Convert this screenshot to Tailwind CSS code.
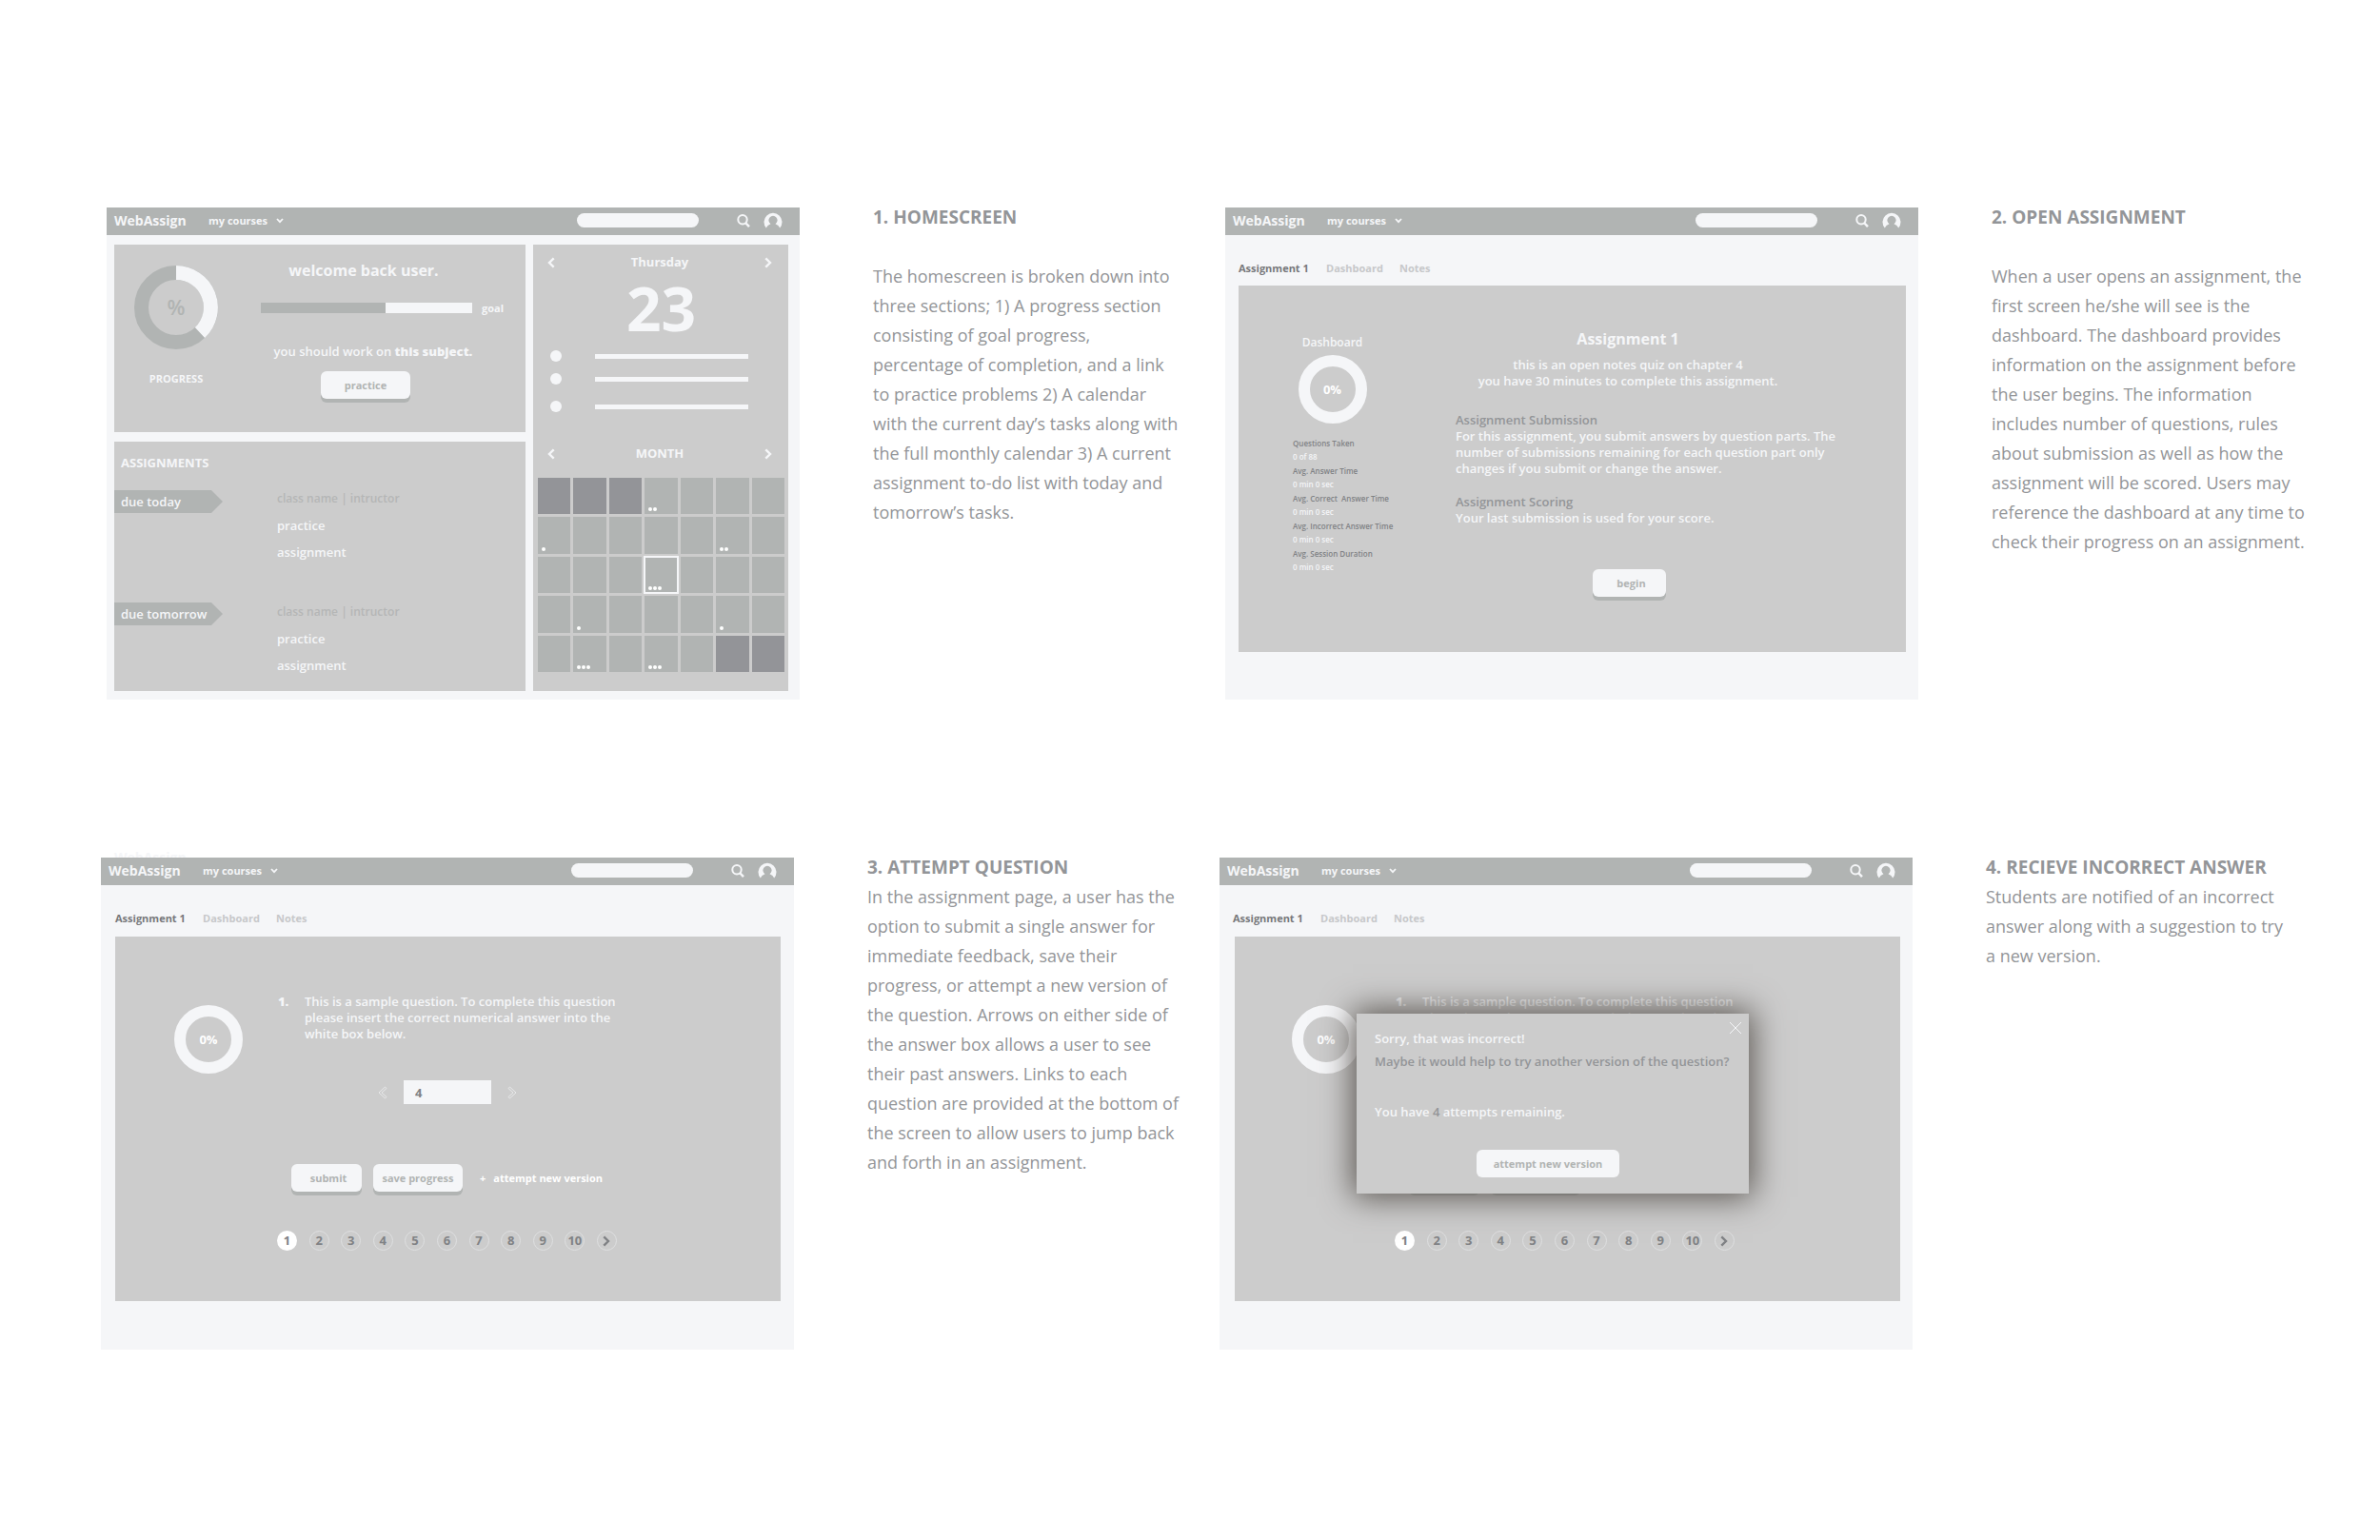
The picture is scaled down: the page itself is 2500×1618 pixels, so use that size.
<!DOCTYPE html>
<html lang="en">
<head>
    <meta charset="UTF-8">
    <meta name="viewport" content="width=device-width, initial-scale=1.0">
    <title>WebAssign Wireframes</title>
    <script src="https://cdn.jsdelivr.net/npm/@tailwindcss/browser@4"></script>
</head>
<body class="bg-white font-['Open_Sans','Noto_Sans',sans-serif] text-[13px] leading-[17px] font-semibold text-[#f5f6f8]">
    <!-- Shared icons -->
    <svg class="hidden" aria-hidden="true">
        <symbol id="down" viewBox="0 0 8 6"><path d="M1 1l3 3.2L7 1" fill="none" stroke="currentColor" stroke-width="1.8"/></symbol>
        <symbol id="left" viewBox="0 0 8 12"><path d="M6.7 1.3L2 6l4.700 4.700" fill="none" stroke="currentColor" stroke-width="2.400"/></symbol>
        <symbol id="right" viewBox="0 0 8 12"><path d="M1.300 1.300L6 6l-4.700 4.700" fill="none" stroke="currentColor" stroke-width="2.400"/></symbol>
        <symbol id="left-thin" viewBox="0 0 10 14"><path d="M7.500 1L1 7l6.500 6L9 11.500 4 7l5-4.500z" fill="none" stroke="currentColor" stroke-width=".8"/></symbol>
        <symbol id="right-thin" viewBox="0 0 10 14"><path d="M2.500 1L9 7l-6.500 6L1 11.500 6 7 1 2.500z" fill="none" stroke="currentColor" stroke-width=".8"/></symbol>
        <symbol id="search" viewBox="0 0 14 14"><circle cx="6" cy="5.800" r="4.700" fill="none" stroke="currentColor" stroke-width="2"/><path d="M9 9l4 4.200" stroke="currentColor" stroke-width="2.500"/></symbol>
        <symbol id="user" viewBox="0 0 20 17"><path d="M2.800 16.500A9.500 9.500 0 1 1 17.200 16.500Q16 13.500 12.500 12.300A4.600 4.600 0 1 0 7.500 12.300Q4 13.500 2.800 16.500z" fill="currentColor"/></symbol>
        <symbol id="close" viewBox="0 0 14 14"><path d="M1 1l12 12M13 1L1 13" stroke="currentColor" stroke-width="1"/></symbol>
    </svg>

    <div class="pt-[218px] pb-[200px] flex flex-col gap-[166px]">
        <div class="grid grid-cols-2 pl-[112px] pr-[38px]">

            <!-- 1. Homescreen -->
            <section class="grid grid-cols-[728fr_370fr] gap-x-[77px] items-start">
                <div class="bg-[#f5f6f8] min-w-0">
                    <header class="bg-[#b1b4b3] h-[29px] pl-2 pr-[18px] pb-0.5 flex items-center">
                        <a href="#" class="w-[99px] text-sm leading-[17px] font-bold">WebAssign</a>
                        <label class="relative flex items-center">
                            <select aria-label="Courses" class="appearance-none w-[79px] text-[11px] font-bold"><option>my courses</option></select>
                            <svg class="absolute right-0 w-2 h-1.5"><use href="#down"/></svg>
                        </label>
                        <input type="search" aria-label="Search" class="ml-auto w-32 h-[15px] rounded-full bg-[#f5f6f8]">
                        <button aria-label="Search" class="ml-10"><svg class="w-3.5 h-3.5"><use href="#search"/></svg></button>
                        <button aria-label="Account" class="ml-3.5"><svg class="w-5 h-[17px]"><use href="#user"/></svg></button>
                    </header>
                    <div class="grid grid-cols-[432fr_268fr] gap-2 pl-2 pr-3 pt-2.5 pb-[9px]">
                        <div class="flex flex-col gap-2.5 min-w-0">
                            <!-- Progress -->
                            <div class="bg-[#cccccc] h-[197px] flex">
                                <div class="w-[130px] pt-[22px] flex flex-col items-center">
                                    <svg class="w-[88px] h-[88px]" viewBox="0 0 88 88">
                                        <circle cx="44" cy="44" r="36.500" fill="none" stroke="#b1b4b3" stroke-width="15"/>
                                        <path d="M44 7.500A36.500 36.500 0 0 1 69 70.500" fill="none" stroke="#f5f6f8" stroke-width="15"/>
                                        <text x="44" y="52" text-anchor="middle" font-size="22" font-weight="600" fill="#b1b4b3">%</text>
                                    </svg>
                                    <p class="mt-[22px] text-[11px] font-bold">PROGRESS</p>
                                </div>
                                <div class="flex-1 pt-4 pl-6">
                                    <h2 class="w-[216px] text-center text-base leading-[22px] font-bold">welcome back user.</h2>
                                    <div class="mt-[20px] flex items-center gap-2.5">
                                        <div class="w-[222px] h-[11px] bg-[#f5f6f8]"><div class="h-full bg-[#b1b4b3]" style="width:59%"></div></div>
                                        <span class="text-[11px] font-bold">goal</span>
                                    </div>
                                    <p class="mt-[29px] w-[236px] text-center text-[13px]">you should work on <b>this subject.</b></p>
                                    <button class="mt-3 ml-[63px] w-[94px] h-[29px] rounded-md bg-[#f5f6f8] shadow-[0_4px_0_#b1b4b3] text-[#b1b4b3] text-[11px] font-bold">practice</button>
                                </div>
                            </div>
                            <!-- Assignments -->
                            <div class="bg-[#cccccc] h-[262px] pt-3.5">
                                <h2 class="pl-[7px] text-[13px] font-bold">ASSIGNMENTS</h2>
                                <div class="mt-5 h-[118px] flex items-start">
                                    <div class="relative w-[114px] h-6 flex items-center pl-[7px]">
                                        <svg class="absolute left-0 top-0 w-[114px] h-6" viewBox="0 0 114 24"><path d="M0 0h102l12 12-12 12H0z" fill="#b1b4b3"/></svg>
                                        <span class="relative">due today</span>
                                    </div>
                                    <ul class="ml-[57px] leading-7 -mt-[5px]">
                                        <li class="text-xs leading-7 text-[#b5b6b6]">class name | intructor</li>
                                        <li><a href="#">practice</a></li>
                                        <li><a href="#">assignment</a></li>
                                    </ul>
                                </div>
                                <div class="flex items-start">
                                    <div class="relative w-[114px] h-6 flex items-center pl-[7px]">
                                        <svg class="absolute left-0 top-0 w-[114px] h-6" viewBox="0 0 114 24"><path d="M0 0h102l12 12-12 12H0z" fill="#b1b4b3"/></svg>
                                        <span class="relative">due tomorrow</span>
                                    </div>
                                    <ul class="ml-[57px] leading-7 -mt-1">
                                        <li class="text-xs leading-7 text-[#b5b6b6]">class name | intructor</li>
                                        <li><a href="#">practice</a></li>
                                        <li><a href="#">assignment</a></li>
                                    </ul>
                                </div>
                            </div>
                        </div>

                        <!-- Calendar -->
                        <div class="bg-[#cccccc] pl-[5px] pr-1 pt-2.5">
                            <div class="flex items-center justify-between pl-2.5 pr-[13px]">
                                <button aria-label="Previous day"><svg class="w-2 h-3"><use href="#left"/></svg></button>
                                <h2 class="font-bold">Thursday</h2>
                                <button aria-label="Next day"><svg class="w-2 h-3"><use href="#right"/></svg></button>
                            </div>
                            <p class="mt-1 text-center text-[64px] leading-[72px] font-bold">23</p>
                            <div class="mt-2 pl-[13px] flex flex-col">
                                <div class="flex items-center gap-[35px]"><i class="w-3 h-3 rounded-full bg-[#f5f6f8]"></i><i class="w-[161px] h-[5px] bg-[#f5f6f8]"></i></div>
                                <div class="mt-3 flex items-center gap-[35px]"><i class="w-3 h-3 rounded-full bg-[#f5f6f8]"></i><i class="w-[161px] h-[5px] bg-[#f5f6f8]"></i></div>
                                <div class="mt-[17px] flex items-center gap-[35px]"><i class="w-3 h-3 rounded-full bg-[#f5f6f8]"></i><i class="w-[161px] h-[5px] bg-[#f5f6f8]"></i></div>
                            </div>
                            <div class="mt-[35px] flex items-center justify-between pl-2.5 pr-[13px]">
                                <button aria-label="Previous month"><svg class="w-2 h-3"><use href="#left"/></svg></button>
                                <h2 class="font-bold">MONTH</h2>
                                <button aria-label="Next month"><svg class="w-2 h-3"><use href="#right"/></svg></button>
                            </div>
                            <div id="calendar" class="mt-[17px] h-[204px] grid grid-cols-7 grid-rows-5 gap-[3px]"></div>
                        </div>
                    </div>
                </div>
                <div class="-mt-[5px] text-lg leading-[31px] font-normal text-[#939598]">
                    <h1 class="text-[19px] leading-[31px] font-bold mb-[31px]">1. HOMESCREEN</h1>
                    <p>The homescreen is broken down into<br>three sections; 1) A progress section<br>consisting of goal progress,<br>percentage of completion, and a link<br>to practice problems 2) A calendar<br>with the current day’s tasks along with<br>the full monthly calendar 3) A current<br>assignment to-do list with today and<br>tomorrow’s tasks.</p>
                </div>
            </section>

            <!-- 2. Open assignment -->
            <section class="grid grid-cols-[728fr_370fr] gap-x-[77px] items-start">
                <div class="bg-[#f5f6f8] min-w-0 pb-[50px]">
                    <header class="bg-[#b1b4b3] h-[29px] pl-2 pr-[18px] pb-0.5 flex items-center">
                        <a href="#" class="w-[99px] text-sm leading-[17px] font-bold">WebAssign</a>
                        <label class="relative flex items-center">
                            <select aria-label="Courses" class="appearance-none w-[79px] text-[11px] font-bold"><option>my courses</option></select>
                            <svg class="absolute right-0 w-2 h-1.5"><use href="#down"/></svg>
                        </label>
                        <input type="search" aria-label="Search" class="ml-auto w-32 h-[15px] rounded-full bg-[#f5f6f8]">
                        <button aria-label="Search" class="ml-10"><svg class="w-3.5 h-3.5"><use href="#search"/></svg></button>
                        <button aria-label="Account" class="ml-3.5"><svg class="w-5 h-[17px]"><use href="#user"/></svg></button>
                    </header>
                    <nav class="h-[53px] pt-[26px] pl-3.5 flex text-[11px] text-[#c7c8ca]">
                        <a href="#" class="w-[92px] font-bold text-[#77787b]">Assignment 1</a>
                        <a href="#" class="w-[77px] font-bold">Dashboard</a>
                        <a href="#" class="font-bold">Notes</a>
                    </nav>
                    <div class="ml-3.5 mr-[13px] h-[385px] bg-[#cccccc] flex">
                        <div class="w-[197px] pt-[51px]">
                            <h2 class="text-center text-xs leading-[17px]">Dashboard</h2>
                            <div class="mt-[5px] mx-auto w-[72px] h-[72px] rounded-full border-12 border-[#f5f6f8] flex items-center justify-center text-[13px] font-bold text-white">0%</div>
                            <dl class="mt-[14px] pl-[57px] text-[8px] leading-[14px]">
                                <dt class="text-[#808285]">Questions Taken</dt><dd class="mb-px">0 of 88</dd>
                                <dt class="text-[#808285]">Avg. Answer Time</dt><dd class="mb-px">0 min 0 sec</dd>
                                <dt class="text-[#808285]">Avg. Correct&nbsp; Answer Time</dt><dd class="mb-px">0 min 0 sec</dd>
                                <dt class="text-[#808285]">Avg. Incorrect Answer Time</dt><dd class="mb-px">0 min 0 sec</dd>
                                <dt class="text-[#808285]">Avg. Session Duration</dt><dd>0 min 0 sec</dd>
                            </dl>
                        </div>
                        <div class="flex-1 pt-[45px] pl-[31px]">
                            <div class="w-[362px] text-center">
                                <h2 class="text-base leading-[22px] font-bold">Assignment 1</h2>
                                <p class="mt-2">this is an open notes quiz on chapter 4<br>you have 30 minutes to complete this assignment.</p>
                            </div>
                            <h3 class="mt-6 text-[#939598]">Assignment Submission</h3>
                            <p>For this assignment, you submit answers by question parts. The<br>number of submissions remaining for each question part only<br>changes if you submit or change the answer.</p>
                            <h3 class="mt-[18px] text-[#939598]">Assignment Scoring</h3>
                            <p>Your last submission is used for your score.</p>
                            <button class="mt-[45px] ml-36 w-[77px] h-[29px] rounded-md bg-[#f5f6f8] shadow-[0_4px_0_#b1b4b3] text-[#b1b4b3] text-[11px] font-bold pl-1">begin</button>
                        </div>
                    </div>
                </div>
                <div class="-mt-[5px] text-lg leading-[31px] font-normal text-[#939598]">
                    <h1 class="text-[19px] leading-[31px] font-bold mb-[31px]">2. OPEN ASSIGNMENT</h1>
                    <p>When a user opens an assignment, the<br>first screen he/she will see is the<br>dashboard. The dashboard provides<br>information on the assignment before<br>the user begins. The information<br>includes number of questions, rules<br>about submission as well as how the<br>assignment will be scored. Users may<br>reference the dashboard at any time to<br>check their progress on an assignment.</p>
                </div>
            </section>
        </div>

        <div class="grid grid-cols-2 pl-[106px] pr-[44px]">

            <!-- 3. Attempt question -->
            <section class="grid grid-cols-[728fr_370fr] gap-x-[77px] items-start">
                <div class="relative bg-[#f5f6f8] min-w-0 pb-[51px]">
                    <span class="absolute left-3.5 -top-[9px] text-sm leading-[17px] font-bold" aria-hidden="true">WebAssign</span>
                    <header class="relative bg-[#b1b4b3] h-[29px] pl-2 pr-[18px] pb-0.5 flex items-center">
                        <a href="#" class="w-[99px] text-sm leading-[17px] font-bold">WebAssign</a>
                        <label class="relative flex items-center">
                            <select aria-label="Courses" class="appearance-none w-[79px] text-[11px] font-bold"><option>my courses</option></select>
                            <svg class="absolute right-0 w-2 h-1.5"><use href="#down"/></svg>
                        </label>
                        <input type="search" aria-label="Search" class="ml-auto w-32 h-[15px] rounded-full bg-[#f5f6f8]">
                        <button aria-label="Search" class="ml-10"><svg class="w-3.5 h-3.5"><use href="#search"/></svg></button>
                        <button aria-label="Account" class="ml-3.5"><svg class="w-5 h-[17px]"><use href="#user"/></svg></button>
                    </header>
                    <nav class="h-[54px] pt-[26px] pl-[15px] flex text-[11px] text-[#c7c8ca]">
                        <a href="#" class="w-[92px] font-bold text-[#77787b]">Assignment 1</a>
                        <a href="#" class="w-[77px] font-bold">Dashboard</a>
                        <a href="#" class="font-bold">Notes</a>
                    </nav>
                    <div class="ml-[15px] mr-3.5 h-[383px] bg-[#cccccc] flex">
                        <div class="pt-[72px] pl-[62px]">
                            <div class="w-[72px] h-[72px] rounded-full border-12 border-[#f5f6f8] flex items-center justify-center text-[13px] font-bold text-white">0%</div>
                        </div>
                        <div class="flex-1 pt-[60px] pl-[37px]">
                            <div class="flex h-[91px]">
                                <b class="w-7">1.</b>
                                <p>This is a sample question. To complete this question<br>please insert the correct numerical answer into the<br>white box below.</p>
                            </div>
                            <div class="ml-[105px] flex items-center">
                                <button aria-label="Previous answer"><svg class="w-2.5 h-3.5 text-[#eeeff0]"><use href="#left-thin"/></svg></button>
                                <input type="text" aria-label="Answer" value="4" class="mx-[17px] w-[92px] h-[25px] pl-3 bg-[#f5f6f8] text-[13px] font-bold text-[#808285]">
                                <button aria-label="Next answer"><svg class="w-2.5 h-3.5 text-[#eeeff0]"><use href="#right-thin"/></svg></button>
                            </div>
                            <div class="mt-[63px] ml-3.5 flex items-center">
                                <button class="w-[74px] h-[29px] rounded-md bg-[#f5f6f8] shadow-[0_4px_0_#b1b4b3] text-[#b1b4b3] text-[11px] font-bold pl-1">submit</button>
                                <button class="ml-3 w-[94px] h-[29px] rounded-md bg-[#f5f6f8] shadow-[0_4px_0_#b1b4b3] text-[#b1b4b3] text-[11px] font-bold">save progress</button>
                                <button class="ml-[18px] flex gap-2 text-[11px] font-bold text-white"><span>+</span>attempt new version</button>
                            </div>
                            <nav class="mt-[41px] w-[357px] flex justify-between -ml-px text-[13px] font-bold text-[#808285]">
                                <a href="#" class="w-[21px] h-[21px] rounded-full flex items-center justify-center bg-white">1</a>
                                <a href="#" class="w-[21px] h-[21px] rounded-full flex items-center justify-center border border-[#dfe0e1]">2</a>
                                <a href="#" class="w-[21px] h-[21px] rounded-full flex items-center justify-center border border-[#dfe0e1]">3</a>
                                <a href="#" class="w-[21px] h-[21px] rounded-full flex items-center justify-center border border-[#dfe0e1]">4</a>
                                <a href="#" class="w-[21px] h-[21px] rounded-full flex items-center justify-center border border-[#dfe0e1]">5</a>
                                <a href="#" class="w-[21px] h-[21px] rounded-full flex items-center justify-center border border-[#dfe0e1]">6</a>
                                <a href="#" class="w-[21px] h-[21px] rounded-full flex items-center justify-center border border-[#dfe0e1]">7</a>
                                <a href="#" class="w-[21px] h-[21px] rounded-full flex items-center justify-center border border-[#dfe0e1]">8</a>
                                <a href="#" class="w-[21px] h-[21px] rounded-full flex items-center justify-center border border-[#dfe0e1]">9</a>
                                <a href="#" class="w-[21px] h-[21px] rounded-full flex items-center justify-center border border-[#dfe0e1]">10</a>
                                <a href="#" aria-label="Next" class="w-[21px] h-[21px] rounded-full flex items-center justify-center border border-[#dfe0e1]"><svg class="w-2 h-3"><use href="#right"/></svg></a>
                            </nav>
                        </div>
                    </div>
                </div>
                <div class="-mt-[5px] text-lg leading-[31px] font-normal text-[#939598]">
                    <h1 class="text-[19px] leading-[31px] font-bold">3. ATTEMPT QUESTION</h1>
                    <p>In the assignment page, a user has the<br>option to submit a single answer for<br>immediate feedback, save their<br>progress, or attempt a new version of<br>the question. Arrows on either side of<br>the answer box allows a user to see<br>their past answers. Links to each<br>question are provided at the bottom of<br>the screen to allow users to jump back<br>and forth in an assignment.</p>
                </div>
            </section>

            <!-- 4. Incorrect answer -->
            <section class="grid grid-cols-[728fr_370fr] gap-x-[77px] items-start">
                <div class="bg-[#f5f6f8] min-w-0 pb-[51px]">
                    <header class="bg-[#b1b4b3] h-[29px] pl-2 pr-[18px] pb-0.5 flex items-center">
                        <a href="#" class="w-[99px] text-sm leading-[17px] font-bold">WebAssign</a>
                        <label class="relative flex items-center">
                            <select aria-label="Courses" class="appearance-none w-[79px] text-[11px] font-bold"><option>my courses</option></select>
                            <svg class="absolute right-0 w-2 h-1.5"><use href="#down"/></svg>
                        </label>
                        <input type="search" aria-label="Search" class="ml-auto w-32 h-[15px] rounded-full bg-[#f5f6f8]">
                        <button aria-label="Search" class="ml-10"><svg class="w-3.5 h-3.5"><use href="#search"/></svg></button>
                        <button aria-label="Account" class="ml-3.5"><svg class="w-5 h-[17px]"><use href="#user"/></svg></button>
                    </header>
                    <nav class="h-[54px] pt-[26px] pl-3.5 flex text-[11px] text-[#c7c8ca]">
                        <a href="#" class="w-[92px] font-bold text-[#77787b]">Assignment 1</a>
                        <a href="#" class="w-[77px] font-bold">Dashboard</a>
                        <a href="#" class="font-bold">Notes</a>
                    </nav>
                    <div class="relative ml-4 mr-[13px] h-[383px] bg-[#cccccc] flex">
                        <div class="pt-[72px] pl-[60px]">
                            <div class="w-[72px] h-[72px] rounded-full border-12 border-[#f5f6f8] flex items-center justify-center text-[13px] font-bold text-white">0%</div>
                        </div>
                        <div class="flex-1 pt-[60px] pl-[37px]">
                            <div class="flex h-[179px]">
                                <b class="w-7">1.</b>
                                <p>This is a sample question. To complete this question<br>please insert the correct numerical answer into the<br>white box below.</p>
                            </div>
                            <div class="ml-3.5 flex items-center">
                                <button class="w-[74px] h-[29px] rounded-md bg-[#f5f6f8] shadow-[0_4px_0_#b1b4b3] text-[#b1b4b3] text-[11px] font-bold pl-1">submit</button>
                                <button class="ml-3 w-[94px] h-[29px] rounded-md bg-[#f5f6f8] shadow-[0_4px_0_#b1b4b3] text-[#b1b4b3] text-[11px] font-bold">save progress</button>
                            </div>
                            <nav class="mt-[41px] w-[357px] flex justify-between -ml-px text-[13px] font-bold text-[#808285]">
                                <a href="#" class="w-[21px] h-[21px] rounded-full flex items-center justify-center bg-white">1</a>
                                <a href="#" class="w-[21px] h-[21px] rounded-full flex items-center justify-center border border-[#dfe0e1]">2</a>
                                <a href="#" class="w-[21px] h-[21px] rounded-full flex items-center justify-center border border-[#dfe0e1]">3</a>
                                <a href="#" class="w-[21px] h-[21px] rounded-full flex items-center justify-center border border-[#dfe0e1]">4</a>
                                <a href="#" class="w-[21px] h-[21px] rounded-full flex items-center justify-center border border-[#dfe0e1]">5</a>
                                <a href="#" class="w-[21px] h-[21px] rounded-full flex items-center justify-center border border-[#dfe0e1]">6</a>
                                <a href="#" class="w-[21px] h-[21px] rounded-full flex items-center justify-center border border-[#dfe0e1]">7</a>
                                <a href="#" class="w-[21px] h-[21px] rounded-full flex items-center justify-center border border-[#dfe0e1]">8</a>
                                <a href="#" class="w-[21px] h-[21px] rounded-full flex items-center justify-center border border-[#dfe0e1]">9</a>
                                <a href="#" class="w-[21px] h-[21px] rounded-full flex items-center justify-center border border-[#dfe0e1]">10</a>
                                <a href="#" aria-label="Next" class="w-[21px] h-[21px] rounded-full flex items-center justify-center border border-[#dfe0e1]"><svg class="w-2 h-3"><use href="#right"/></svg></a>
                            </nav>
                        </div>

                        <!-- Dialog -->
                        <div role="dialog" aria-label="Incorrect answer" class="absolute left-32 top-[81px] w-[412px] h-[189px] bg-[#cccccc] shadow-[0_0_32px_4px_#5a5550] pl-[19px] pt-[18px]">
                            <button aria-label="Close" class="absolute right-[7px] top-2"><svg class="w-3.5 h-3.5"><use href="#close"/></svg></button>
                            <p>Sorry, that was incorrect!</p>
                            <p class="mt-[7px] text-[#939598]">Maybe it would help to try another version of the question?</p>
                            <p class="mt-9">You have <span class="text-[#939598]">4</span> attempts remaining.</p>
                            <button class="mt-[31px] ml-[107px] w-[150px] h-[29px] rounded-md bg-[#f5f6f8] text-[#b1b4b3] text-[11px] font-bold">attempt new version</button>
                        </div>
                    </div>
                </div>
                <div class="-mt-[5px] text-lg leading-[31px] font-normal text-[#939598]">
                    <h1 class="text-[19px] leading-[31px] font-bold">4. RECIEVE INCORRECT ANSWER</h1>
                    <p>Students are notified of an incorrect<br>answer along with a suggestion to try<br>a new version.</p>
                </div>
            </section>
        </div>
    </div>

    <script>
        // number of tasks per day cell
        const tasks = { 3: 2, 7: 1, 12: 2, 17: 3, 22: 1, 26: 1, 29: 3, 31: 3 };
        const outside = [0, 1, 2, 33, 34];
        const today = 17;
        const calendar = document.getElementById('calendar');

        for (let i = 0; i < 35; i++) {
            const cell = document.createElement('div');
            cell.className = 'flex items-end gap-px pl-1 pb-[3px] ' + (outside.includes(i) ? 'bg-[#939498]' : 'bg-[#b1b4b3]');
            if (i === today) cell.className += ' outline-2 outline-[#f5f6f8] -outline-offset-1';
            for (let n = 0; n < (tasks[i] || 0); n++) {
                const dot = document.createElement('i');
                dot.className = 'w-1 h-1 rounded-full bg-white';
                cell.appendChild(dot);
            }
            calendar.appendChild(cell);
        }
    </script>
</body>
</html>
